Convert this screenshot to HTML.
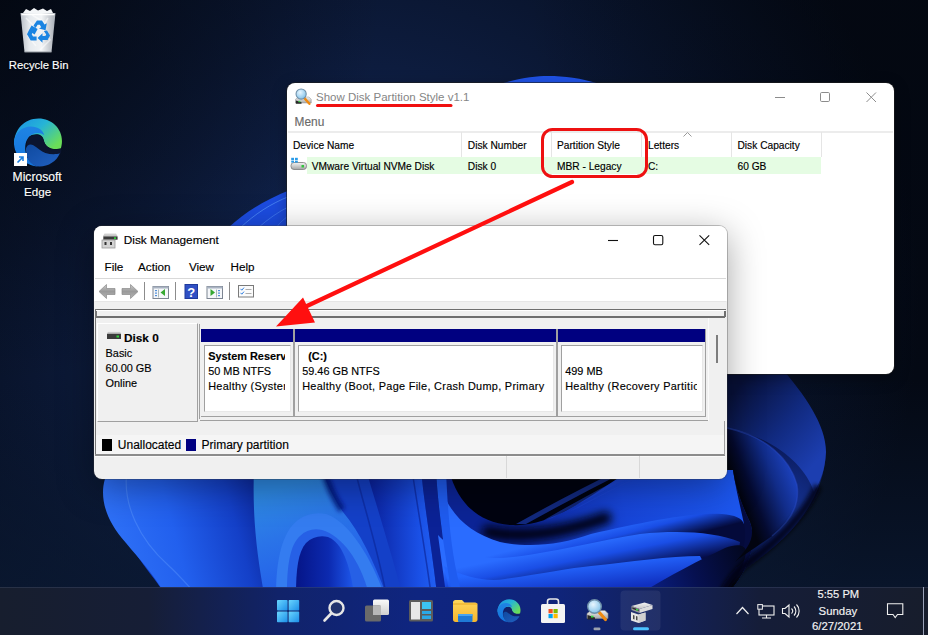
<!DOCTYPE html>
<html><head><meta charset="utf-8">
<style>
*{margin:0;padding:0;box-sizing:border-box}
html,body{width:928px;height:635px;overflow:hidden}
body{position:relative;font-family:"Liberation Sans",sans-serif;background:#0a1224;color:#000}
.a{position:absolute;white-space:nowrap;line-height:1;-webkit-text-stroke:.15px currentColor}
svg{position:absolute;overflow:visible}
</style></head><body>
<svg style="left:0;top:0" width="928" height="635" viewBox="0 0 928 635">
<defs>
<radialGradient id="bgr" gradientUnits="userSpaceOnUse" cx="360" cy="300" r="560">
<stop offset="0" stop-color="#132a5c"/><stop offset=".42" stop-color="#0d1c3e"/><stop offset=".72" stop-color="#081228"/><stop offset="1" stop-color="#040914"/>
</radialGradient>
<radialGradient id="bgtl" gradientUnits="userSpaceOnUse" cx="0" cy="0" r="380">
<stop offset="0" stop-color="#03070f" stop-opacity=".8"/><stop offset=".6" stop-color="#03070f" stop-opacity=".35"/><stop offset="1" stop-color="#03070f" stop-opacity="0"/>
</radialGradient>
<radialGradient id="bgtr" gradientUnits="userSpaceOnUse" cx="928" cy="0" r="400">
<stop offset="0" stop-color="#03070f" stop-opacity=".6"/><stop offset="1" stop-color="#03070f" stop-opacity="0"/>
</radialGradient>
<linearGradient id="bgb" gradientUnits="userSpaceOnUse" x1="0" y1="380" x2="0" y2="600">
<stop offset="0" stop-color="#0b1a34" stop-opacity="0"/><stop offset="1" stop-color="#0b1a34" stop-opacity=".75"/>
</linearGradient>
<linearGradient id="p1" gradientUnits="userSpaceOnUse" x1="110" y1="530" x2="258" y2="490">
<stop offset="0" stop-color="#2e70f6"/><stop offset=".4" stop-color="#2260ee"/><stop offset=".8" stop-color="#1440c8"/><stop offset="1" stop-color="#0c2aa0"/>
</linearGradient>
<linearGradient id="p1b" gradientUnits="userSpaceOnUse" x1="150" y1="590" x2="250" y2="560">
<stop offset="0" stop-color="#2466f2" stop-opacity="0"/><stop offset="1" stop-color="#2a70ff" stop-opacity=".55"/>
</linearGradient>
<linearGradient id="cy" gradientUnits="userSpaceOnUse" x1="270" y1="490" x2="300" y2="580">
<stop offset="0" stop-color="#2e8ae4"/><stop offset=".5" stop-color="#2a74e8"/><stop offset="1" stop-color="#2462ea"/>
</linearGradient>
<linearGradient id="arc" gradientUnits="userSpaceOnUse" x1="0" y1="510" x2="0" y2="590">
<stop offset="0" stop-color="#2e74f0"/><stop offset="1" stop-color="#1f5cf0"/>
</linearGradient>
<linearGradient id="inarc" gradientUnits="userSpaceOnUse" x1="298" y1="0" x2="354" y2="0">
<stop offset="0" stop-color="#06168a"/><stop offset=".55" stop-color="#0c2ab0"/><stop offset="1" stop-color="#1e58ec"/>
</linearGradient>
<linearGradient id="vb" gradientUnits="userSpaceOnUse" x1="370" y1="0" x2="440" y2="0">
<stop offset="0" stop-color="#0a22a0"/><stop offset=".7" stop-color="#1a50e6"/><stop offset="1" stop-color="#2262f4"/>
</linearGradient>
<linearGradient id="sw1" gradientUnits="userSpaceOnUse" x1="0" y1="525" x2="0" y2="580">
<stop offset="0" stop-color="#2262f4"/><stop offset=".45" stop-color="#1440c8"/><stop offset="1" stop-color="#0a1f90"/>
</linearGradient>
<linearGradient id="sw2" gradientUnits="userSpaceOnUse" x1="450" y1="530" x2="700" y2="480">
<stop offset="0" stop-color="#0a1f90"/><stop offset="1" stop-color="#05104a"/>
</linearGradient>
<linearGradient id="ptop" gradientUnits="userSpaceOnUse" x1="470" y1="520" x2="730" y2="480">
<stop offset="0" stop-color="#0a1f90"/><stop offset=".35" stop-color="#0f2fb8"/><stop offset=".7" stop-color="#1c56ec"/><stop offset="1" stop-color="#1648d8"/>
</linearGradient>
<linearGradient id="rib1r" gradientUnits="userSpaceOnUse" x1="730" y1="485" x2="520" y2="530">
<stop offset="0" stop-color="#1c56ee"/><stop offset=".5" stop-color="#1745d8"/><stop offset="1" stop-color="#0c2496"/>
</linearGradient>
<linearGradient id="rib1" gradientUnits="userSpaceOnUse" x1="560" y1="510" x2="574" y2="542">
<stop offset="0" stop-color="#2060f0" stop-opacity="1"/><stop offset=".4" stop-color="#1440c8" stop-opacity=".9"/><stop offset="1" stop-color="#010310" stop-opacity=".95"/>
</linearGradient>
<linearGradient id="rib2" gradientUnits="userSpaceOnUse" x1="560" y1="538" x2="567" y2="566">
<stop offset="0" stop-color="#2a6cff"/><stop offset=".4" stop-color="#1a4ee6"/><stop offset="1" stop-color="#040a3a"/>
</linearGradient>
<linearGradient id="rib3" gradientUnits="userSpaceOnUse" x1="560" y1="548" x2="567" y2="584">
<stop offset="0" stop-color="#2a6cff"/><stop offset=".4" stop-color="#1a4ee6"/><stop offset="1" stop-color="#050c48"/>
</linearGradient>
<linearGradient id="rib4" gradientUnits="userSpaceOnUse" x1="560" y1="566" x2="563" y2="594">
<stop offset="0" stop-color="#2466ff"/><stop offset="1" stop-color="#1030c0"/>
</linearGradient>
<linearGradient id="curl" gradientUnits="userSpaceOnUse" x1="600" y1="475" x2="720" y2="540">
<stop offset="0" stop-color="#1545d8"/><stop offset=".5" stop-color="#1f5ef4"/><stop offset="1" stop-color="#1a50e0"/>
</linearGradient>
<linearGradient id="crease" gradientUnits="userSpaceOnUse" x1="600" y1="590" x2="750" y2="540">
<stop offset="0" stop-color="#0d2bb0"/><stop offset=".6" stop-color="#061050"/><stop offset="1" stop-color="#020618"/>
</linearGradient>
<linearGradient id="rp" gradientUnits="userSpaceOnUse" x1="740" y1="385" x2="822" y2="455">
<stop offset="0" stop-color="#08113a"/><stop offset=".55" stop-color="#112a80"/><stop offset="1" stop-color="#1c3eb0"/>
</linearGradient>
<radialGradient id="rbody" gradientUnits="userSpaceOnUse" cx="790" cy="500" r="100">
<stop offset="0" stop-color="#14308e"/><stop offset=".55" stop-color="#0a1a5a"/><stop offset="1" stop-color="#02040f"/>
</radialGradient>
<linearGradient id="tongue" gradientUnits="userSpaceOnUse" x1="800" y1="478" x2="742" y2="500">
<stop offset="0" stop-color="#1e46c8"/><stop offset=".4" stop-color="#112c88"/><stop offset=".8" stop-color="#040a30"/><stop offset="1" stop-color="#02040f"/>
</linearGradient>
<linearGradient id="rp2" gradientUnits="userSpaceOnUse" x1="740" y1="0" x2="815" y2="0">
<stop offset="0" stop-color="#050a28"/><stop offset="1" stop-color="#1a40b8"/>
</linearGradient>
<filter id="blur4" filterUnits="userSpaceOnUse" x="0" y="0" width="928" height="635"><feGaussianBlur stdDeviation="4"/></filter>
<filter id="blur2" filterUnits="userSpaceOnUse" x="0" y="0" width="928" height="635"><feGaussianBlur stdDeviation="2"/></filter>
</defs>
<rect width="928" height="635" fill="url(#bgr)"/>
<rect width="928" height="635" fill="url(#bgb)"/>
<rect width="928" height="635" fill="url(#bgtl)"/>
<rect width="928" height="635" fill="url(#bgtr)"/>

<!-- base fill -->
<path d="M109 470 L733 470 C736 490 742 505 750 522 C758 545 748 570 728 594 L165 594 C150 570 100 520 109 470Z" fill="#1440c8"/>
<!-- ===== left petal ===== -->
<path d="M109 470 C100 485 98 512 126 543 C140 560 152 572 165 594 L276 594 C268 555 260 520 253 470Z" fill="url(#p1)"/>

<path d="M127 470 C122 505 140 540 168 565 C180 576 190 588 196 594" fill="none" stroke="#6aa4ff" stroke-opacity=".35" stroke-width="1.2"/>

<!-- ===== cyan petal and arch ===== -->
<path d="M254 470 L322 470 C328 488 335 500 343 512 C360 532 374 562 386 594 L264 594 C258 560 252 520 254 470Z" fill="url(#cy)"/>
<path d="M276 594 C276 560 282 532 298 520 C306 514 316 512 326 514 C350 522 372 560 384 594Z" fill="#347cf0"/>
<path d="M287 594 C287 565 290 545 300 536 C306 530 314 528 322 530 C342 536 360 560 369 594Z" fill="#2660e6"/>
<path d="M296 594 C296 570 298 552 306 543 C312 537 320 535 328 537 C342 542 350 565 354 594Z" fill="url(#inarc)"/>
<!-- ===== vertical bands ===== -->
<path d="M324 470 C328 486 334 498 342 510" fill="none" stroke="#06127a" stroke-width="7" filter="url(#blur2)" opacity=".85"/>
<path d="M366 470 L421 470 C425 510 432 550 437 594 L402 594 C392 555 378 510 366 470Z" fill="url(#vb)"/>
<path d="M355 470 C365 510 378 550 386 594" fill="none" stroke="#0a2090" stroke-opacity=".55" stroke-width="1.5"/>
<path d="M412 470 C418 510 425 550 431 594" fill="none" stroke="#0a2090" stroke-opacity=".6" stroke-width="1.5"/>
<path d="M421 470 L436 470 C440 520 445 560 452 594 L437 594 C432 550 425 510 421 470Z" fill="#0b2296"/>

<!-- ===== sweeping bands + hollow ===== -->
<path d="M436 470 L733 470 C736 490 742 505 750 522 C758 545 748 570 728 594 L452 594 C445 555 438 510 436 470Z" fill="#050c40"/>
<!-- ribbon 1 (petal top surface, behind) -->
<path d="M446 470 L733 470 C736 490 740 505 744 524 L744 560 L446 560Z" fill="url(#rib1r)"/>
<path d="M488 532 C520 538 560 534 605 518" fill="none" stroke="#010310" stroke-width="13" stroke-linecap="round" filter="url(#blur4)" opacity=".95"/>
<!-- hollow -->
<path d="M449 470 C458 505 480 523 511 525 C540 527 570 510 600 490 C615 480 625 474 632 470Z" fill="#010310"/>
<path d="M526 524 C560 505 595 487 628 470 L620 470 C585 486 550 505 516 524Z" fill="#2048d8" opacity=".55"/>
<path d="M552 518 C582 502 612 486 645 470 L637 470 C605 486 575 502 544 520Z" fill="#2048d8" opacity=".5"/>
<path d="M578 508 C605 494 630 480 660 470 L652 470 C625 482 598 496 570 511Z" fill="#2048d8" opacity=".4"/>
<!-- ribbon 2 (curl) -->
<path d="M440 485 C450 515 468 532 500 542 C530 548 560 545 591 534 C640 523 690 512 722 514 C735 515 742 518 744 524 C748 540 742 560 728 594 L446 594Z" fill="url(#rib2)"/>
<!-- ribbon 3 -->
<path d="M438 535 C452 550 470 558 500 558 C540 556 600 540 640 534 C680 530 715 532 740 542 C738 560 734 575 728 594 L446 594Z" fill="url(#rib3)"/>
<!-- ribbon 4 -->
<path d="M444 566 C465 578 488 582 505 579 C540 574 570 568 591 566 C630 562 670 556 700 556 L720 594 L450 594Z" fill="url(#rib4)"/>
<!-- left vertical bright strip of sweep -->
<path d="M436 470 L446 470 C448 520 452 560 462 594 L452 594 C445 555 438 510 436 470Z" fill="#1f5cf0"/>
<!-- ===== bright curl ===== -->
<path d="M640 594 C670 575 700 560 725 548 C738 543 746 545 746 552 C744 568 734 582 726 594Z" fill="url(#crease)"/>
<!-- ===== right side petals ===== -->
<path d="M727 360 L780 366 C805 395 826 425 826 452 C824 500 790 540 745 568 C735 575 728 585 724 594 L728 594 C748 570 758 545 750 522 C742 505 736 490 733 470 L727 470Z" fill="url(#rbody)"/>
<path d="M727 360 L780 366 C805 395 826 425 826 452 C825 470 821 480 814 492 C805 465 775 438 727 428Z" fill="url(#rp)"/>
<path d="M727 428 C765 436 790 458 797 485 C800 505 790 522 772 536 C758 546 742 556 735 562 C748 548 756 538 750 522 C742 505 736 490 733 470 L727 470Z" fill="url(#tongue)"/>
<path d="M727 428 C765 436 790 458 797 485 C800 505 790 522 772 536" fill="none" stroke="#2a4cc8" stroke-opacity=".45" stroke-width="1.5"/>
<path d="M818 486 C805 515 780 540 745 565 C735 573 728 583 722 594" fill="none" stroke="#02040f" stroke-opacity=".8" stroke-width="8" filter="url(#blur2)"/>
<!-- ===== top arc ===== -->
<path d="M500 84 C520 78 535 76 548 76 C565 76 580 78 600 84Z" fill="#1f52e6"/>
<!-- ===== upper left petal edge ===== -->
<path d="M228 228 C245 212 265 200 290 190 L290 228Z" fill="#1c4ce0"/>
<path d="M240 228 C255 214 270 204 290 196" fill="none" stroke="#5fa0ff" stroke-opacity=".6" stroke-width="1"/>
<path d="M258 228 C268 219 278 212 290 206" fill="none" stroke="#5fa0ff" stroke-opacity=".45" stroke-width="1"/>
<path d="M276 228 C280 222 285 218 290 215" fill="none" stroke="#5fa0ff" stroke-opacity=".35" stroke-width="1"/>
</svg>
<svg style="left:18px;top:6px" width="40" height="48" viewBox="0 0 40 48">
<defs><linearGradient id="rbg" x1="0" y1="0" x2="1" y2="0"><stop offset="0" stop-color="#b8bec6"/><stop offset=".25" stop-color="#e6eaee"/><stop offset=".6" stop-color="#f2f4f6"/><stop offset="1" stop-color="#a8aeb6"/></linearGradient></defs>
<path d="M5 7L8 3L12 5L16 2L20 4.5L25 2.5L29 5L33 3L35 7Z" fill="#f4f6f8"/>
<path d="M2.5 7H37.5L33.5 46H6.5Z" fill="url(#rbg)"/>
<path d="M8 12L16 20L10 30L18 40M30 12L24 22L32 34L22 44M14 9L26 16" fill="none" stroke="#ffffff" stroke-opacity=".55" stroke-width="1.5"/>
<path d="M3.5 8.5H36.5" stroke="#ffffff" stroke-width="1.5"/>
<path d="M6.5 46H33.5" stroke="#8f959c" stroke-width="1"/>
<g fill="#1a84e2">
<path d="M15.5 19.5L19 14.5L24 14.5L26.5 18.5L28.8 17.2L27.5 24.2L21 22.5L23.2 21.2L21.8 18.8L19.6 18.8L17.6 22Z"/>
<path d="M29 24.5L32 29.5L29.6 34H24.5V36.8L19.6 32L24.5 27.2V30H27.4L28.2 28.6L25.8 24.9Z"/>
<path d="M10.8 24.4L13.6 19.6L19.6 23L16.6 28.4L14.4 27L13.7 28.3L15 30.6H18.6V34.4H12.7L9 28.2Z"/>
</g>
</svg>
<span class="a" style="left:8.8px;top:60.33px;font-size:11.3px;color:#fff;text-shadow:0 0 2px rgba(0,0,0,.8)">Recycle Bin</span>
<svg style="left:13px;top:117px" width="50" height="50" viewBox="0 0 48 48"><defs>
<linearGradient id="dkea" x1="0" y1="0" x2="1" y2=".7"><stop offset="0" stop-color="#1a8ee6"/><stop offset=".5" stop-color="#26b4d6"/><stop offset="1" stop-color="#6ade58"/></linearGradient>
<linearGradient id="dkeb" x1="0" y1="0" x2="0" y2="1"><stop offset="0" stop-color="#1f84e4"/><stop offset="1" stop-color="#1374dc"/></linearGradient>
<linearGradient id="dkec" x1="0" y1="0" x2="1" y2="1"><stop offset="0" stop-color="#0f4aa0"/><stop offset="1" stop-color="#2160c0"/></linearGradient>
</defs>
<path d="M1 26C1 12 11 1.5 24.5 1.5C37 1.5 47 11 47 23C47 26 46.5 28 46 30C44 30.5 41 31 38 30.5C33 29.5 30 26 29.5 22C29 19 27 17 24 16.5C18 16 13 19 10 23C6 28 3 30 1 26Z" fill="url(#dkea)"/>
<path d="M16 19C20 15.5 27.5 16.5 29.5 22C30.5 27 34 30 39 31C42 31.5 45 31 46.5 30.5L46 35C42 36 36 36.2 31 35.5C24 34.5 16 33 13 29C12.5 25 13.5 21 16 19Z" fill="#0b1530"/>
<path d="M1 25C1 15 9 9 17 9C24 9 29 12.5 30 17.5C27 15 22.5 14.5 18.5 16.5C13 19.5 11 26 12 33C13 40 18 45.5 24 47.5C11 46.5 1 37 1 25Z" fill="url(#dkeb)"/>
<path d="M12.5 30C13.5 26.5 16.5 25.5 19.5 27C23.5 29.5 27 33 31 34.5C36 36 41.5 36 45 34.8C42 42.5 34 47.5 25.5 47.5C19.5 47.5 15 43.5 13.5 38C12.8 35 12.3 32.5 12.5 30Z" fill="url(#dkec)"/>
</svg>
<svg style="left:14px;top:153px" width="13" height="13" viewBox="0 0 13 13">
<rect x="0" y="0" width="13" height="13" fill="#fff"/>
<path d="M3.5 9.5L9 4M5 4H9V8" fill="none" stroke="#1c7fe0" stroke-width="1.6"/>
</svg>
<span class="a" style="left:12.6px;top:170.65px;font-size:12.1px;color:#fff;text-shadow:0 0 2px rgba(0,0,0,.8)">Microsoft</span>
<span class="a" style="left:24.0px;top:185.97px;font-size:11.6px;color:#fff;text-shadow:0 0 2px rgba(0,0,0,.8)">Edge</span>
<div class="a" style="left:287px;top:83px;width:607px;height:291px;background:#fff;border-radius:8px;box-shadow:0 0 0 1px rgba(30,30,30,.6),0 4px 16px rgba(0,0,0,.3)"></div>
<svg style="left:294px;top:88px" width="18" height="18" viewBox="0 0 24 24"><defs><radialGradient id="tisg" cx=".4" cy=".35" r=".7"><stop offset="0" stop-color="#e8f6ff"/><stop offset="1" stop-color="#7ec0e8"/></radialGradient>
<linearGradient id="tisd" x1="0" y1="0" x2="0" y2="1"><stop offset="0" stop-color="#f2f2f2"/><stop offset="1" stop-color="#a9a9a9"/></linearGradient></defs>
<path d="M2 15L6 12H20L23 15V20H2Z" fill="url(#tisd)" stroke="#8a8a8a" stroke-width=".6"/>
<path d="M2.5 16.5L10 19V21H2.5Z" fill="#2a2a2a"/>
<rect x="6" y="17.2" width="2.5" height="1.8" fill="#3bd948"/>
<path d="M13 12.5L20.5 21" stroke="#f08a10" stroke-width="3.2" stroke-linecap="round"/>
<circle cx="9.5" cy="8" r="6.8" fill="url(#tisg)" stroke="#6f8fa8" stroke-width="1.4"/>
</svg>
<span class="a" style="left:316.0px;top:92.26px;font-size:11.5px;color:#858585;-webkit-text-stroke:0">Show Disk Partition Style v1.1</span>
<svg style="left:770px;top:88px" width="115" height="20" viewBox="770 88 115 20">
<path d="M775 97.5H785" stroke="#8c8c8c" stroke-width="1"/>
<rect x="820.5" y="92.5" width="9" height="9" rx="1.2" fill="none" stroke="#8c8c8c" stroke-width="1"/>
<path d="M866.5 92.5L876 102M876 92.5L866.5 102" stroke="#8c8c8c" stroke-width="1"/>
</svg>
<span class="a" style="left:294.6px;top:117.22px;font-size:11.9px;color:#6a6a6a;">Menu</span>
<div class="a" style="left:288px;top:131px;width:605px;height:2px;background:#ececec"></div>
<div class="a" style="left:461px;top:132px;width:1px;height:25px;background:#e5e5e5"></div>
<div class="a" style="left:551px;top:132px;width:1px;height:25px;background:#e5e5e5"></div>
<div class="a" style="left:641px;top:132px;width:1px;height:25px;background:#e5e5e5"></div>
<div class="a" style="left:731px;top:132px;width:1px;height:25px;background:#e5e5e5"></div>
<div class="a" style="left:821px;top:132px;width:1px;height:25px;background:#e5e5e5"></div>
<span class="a" style="left:293.0px;top:140.96px;font-size:10.2px;color:#000;">Device Name</span>
<span class="a" style="left:467.8px;top:140.96px;font-size:10.2px;color:#000;">Disk Number</span>
<span class="a" style="left:557.0px;top:140.96px;font-size:10.2px;color:#000;">Partition Style</span>
<span class="a" style="left:648.0px;top:140.96px;font-size:10.2px;color:#000;">Letters</span>
<span class="a" style="left:737.5px;top:140.96px;font-size:10.2px;color:#000;">Disk Capacity</span>
<svg style="left:682px;top:130px" width="12" height="8" viewBox="682 130 12 8"><path d="M683.5 136.5L687.5 132.5L691.5 136.5" fill="none" stroke="#9a9a9a" stroke-width="1"/></svg>
<svg style="left:290px;top:157px" width="18" height="14" viewBox="0 0 18 14">
<defs><linearGradient id="rdg" x1="0" y1="0" x2="0" y2="1"><stop offset="0" stop-color="#f4f4f4"/><stop offset="1" stop-color="#a4a4a4"/></linearGradient></defs>
<rect x="1" y="5.5" width="15.5" height="7" rx="3" fill="url(#rdg)" stroke="#7a7a7a" stroke-width=".8"/>
<rect x="11.5" y="8" width="2.5" height="2.5" fill="#33c43d"/>
<rect x="1.2" y="0.8" width="2.8" height="2.6" fill="#2a9be8"/><rect x="5" y="0.8" width="2.8" height="2.6" fill="#2a9be8"/>
<rect x="1.2" y="4" width="2.8" height="1.6" fill="#2a9be8"/><rect x="5" y="4" width="2.8" height="1.6" fill="#2a9be8"/>
</svg>
<div class="a" style="left:307px;top:157px;width:514px;height:17px;background:#e5fce3"></div>
<span class="a" style="left:311.7px;top:161.76px;font-size:10.2px;color:#000;">VMware Virtual NVMe Disk</span>
<span class="a" style="left:467.8px;top:161.76px;font-size:10.2px;color:#000;">Disk 0</span>
<span class="a" style="left:557.0px;top:161.76px;font-size:10.2px;color:#000;">MBR - Legacy</span>
<span class="a" style="left:648.0px;top:161.76px;font-size:10.2px;color:#000;">C:</span>
<span class="a" style="left:737.5px;top:161.76px;font-size:10.2px;color:#000;">60 GB</span>
<div class="a" style="left:94px;top:226px;width:633px;height:253px;background:#f0f0f0;border-radius:8px;box-shadow:0 0 0 1px rgba(60,60,60,.3),0 8px 36px rgba(0,0,0,.36)"></div>
<div class="a" style="left:94px;top:226px;width:633px;height:75px;background:#fff;border-radius:8px 8px 0 0"></div>
<div class="a" style="left:95px;top:278px;width:631px;height:1px;background:#d9d9d9"></div>
<div class="a" style="left:95px;top:301px;width:631px;height:1px;background:#e6e6e6"></div>
<svg style="left:101px;top:232px" width="18" height="17" viewBox="0 0 18 17">
<defs><linearGradient id="dmi" x1="0" y1="0" x2="0" y2="1"><stop offset="0" stop-color="#d8d8d8"/><stop offset="1" stop-color="#a8a8a8"/></linearGradient></defs>
<path d="M3.5 1.5H15L16.5 4V8H2V4Z" fill="url(#dmi)"/>
<rect x="2.5" y="4.5" width="14" height="3" fill="#3a3a3a"/>
<rect x="13" y="5.3" width="2" height="1.6" fill="#2fdc3a"/>
<rect x="1" y="8" width="13" height="8" fill="#d4d4d4" stroke="#9a9a9a" stroke-width=".8"/>
<rect x="3.5" y="10" width="2" height="3" fill="#333"/>
<rect x="9" y="10" width="2" height="3" fill="#333"/>
</svg>
<span class="a" style="left:123.8px;top:234.51px;font-size:11.8px;color:#000;">Disk Management</span>
<svg style="left:600px;top:230px" width="115" height="20" viewBox="600 230 115 20">
<path d="M608 240.5H618" stroke="#111" stroke-width="1.1"/>
<rect x="653.5" y="235.5" width="9.3" height="9.3" rx="1.5" fill="none" stroke="#111" stroke-width="1.1"/>
<path d="M699.5 235.3L709.2 244.8M709.2 235.3L699.5 244.8" stroke="#111" stroke-width="1.1"/>
</svg>
<span class="a" style="left:104.5px;top:260.79px;font-size:11.7px;color:#000;">File</span>
<span class="a" style="left:138.0px;top:260.79px;font-size:11.7px;color:#000;">Action</span>
<span class="a" style="left:188.9px;top:260.79px;font-size:11.7px;color:#000;">View</span>
<span class="a" style="left:230.5px;top:260.79px;font-size:11.7px;color:#000;">Help</span>
<svg style="left:94px;top:279px" width="170" height="22" viewBox="94 279 170 22">
<defs>
<linearGradient id="arr" x1="0" y1="0" x2="0" y2="1"><stop offset="0" stop-color="#c9c9c9"/><stop offset=".5" stop-color="#9a9a9a"/><stop offset="1" stop-color="#b5b5b5"/></linearGradient>
</defs>
<path d="M99 291.5L106.5 284.5V288.5H115V294.5H106.5V298.5Z" fill="url(#arr)" stroke="#8a8a8a" stroke-width=".7"/>
<path d="M138 291.5L130.5 284.5V288.5H122V294.5H130.5V298.5Z" fill="url(#arr)" stroke="#8a8a8a" stroke-width=".7"/>
<path d="M144.5 282V300" stroke="#8c8c8c" stroke-width="1"/>
<rect x="153" y="286.5" width="15.5" height="12" fill="#f5f7fa" stroke="#7d8592" stroke-width="1"/>
<rect x="153" y="286.5" width="15.5" height="2" fill="#a9b3c2"/>
<rect x="155" y="290" width="2" height="1.2" fill="#4f8ed8"/><rect x="155" y="292.5" width="2" height="1.2" fill="#4f8ed8"/><rect x="155" y="295" width="2" height="1.2" fill="#4f8ed8"/>
<path d="M158.5 289.5V297.5" stroke="#9aa" stroke-width=".8"/>
<path d="M165 289L160.5 292.5L165 296Z" fill="#36a832"/>
<path d="M175.5 282V300" stroke="#8c8c8c" stroke-width="1"/>
<rect x="184.5" y="284" width="13.5" height="15" fill="#1f3a9c"/>
<rect x="185.5" y="285" width="11.5" height="13" fill="#3050c4"/>
<text x="191.2" y="296.5" font-family="Liberation Sans" font-weight="bold" font-size="13" fill="#fff" text-anchor="middle">?</text>
<rect x="207" y="286.5" width="15.5" height="12" fill="#f5f7fa" stroke="#7d8592" stroke-width="1"/>
<rect x="207" y="286.5" width="15.5" height="2" fill="#a9b3c2"/>
<rect x="218" y="290" width="2" height="1.2" fill="#4f8ed8"/><rect x="218" y="292.5" width="2" height="1.2" fill="#4f8ed8"/><rect x="218" y="295" width="2" height="1.2" fill="#4f8ed8"/>
<path d="M216.5 289.5V297.5" stroke="#9aa" stroke-width=".8"/>
<path d="M210.5 289L215 292.5L210.5 296Z" fill="#36a832"/>
<path d="M229.5 282V300" stroke="#8c8c8c" stroke-width="1"/>
<rect x="238.5" y="285.5" width="15" height="11.5" fill="#fbfbfb" stroke="#7a7a7a" stroke-width="1"/>
<path d="M240.5 288.8L241.8 290.2L244 287.6M240.5 292.8L241.8 294.2L244 291.6" fill="none" stroke="#2d7de0" stroke-width="1"/>
<path d="M245.5 289.5H251.5M245.5 293.5H251.5" stroke="#999" stroke-width=".8"/>
</svg>
<div class="a" style="left:95px;top:309px;width:631px;height:1px;background:#6f6f6f"></div>
<div class="a" style="left:95px;top:309px;width:1.5px;height:146px;background:#767676"></div>
<div class="a" style="left:96px;top:310px;width:629px;height:1px;background:#fff"></div>
<div class="a" style="left:96px;top:316px;width:629px;height:1.5px;background:#6f6f6f"></div>
<div class="a" style="left:724px;top:311px;width:1.5px;height:6px;background:#6f6f6f"></div>
<div class="a" style="left:96px;top:318px;width:629px;height:136px;background:#f0f0f0"></div>
<div class="a" style="left:97px;top:323px;width:101px;height:99px;background:#f0f0f0;border-top:1px solid #fff;border-left:1px solid #fff;border-right:1px solid #a0a0a0;border-bottom:1px solid #a0a0a0"></div>
<svg style="left:106px;top:330px" width="16" height="11" viewBox="0 0 16 11">
<defs><linearGradient id="dk" x1="0" y1="0" x2="0" y2="1"><stop offset="0" stop-color="#e8e8e8"/><stop offset="1" stop-color="#9c9c9c"/></linearGradient></defs>
<path d="M2 1.5H14L15 4H1Z" fill="url(#dk)"/>
<rect x="1" y="4" width="14" height="5" fill="#3b3b3b"/>
<rect x="10.5" y="5.5" width="2.5" height="2" fill="#32d43c"/>
</svg>
<span class="a" style="left:124.0px;top:332.71px;font-size:11.8px;color:#000;font-weight:bold;">Disk 0</span>
<span class="a" style="left:105.6px;top:348.27px;font-size:10.9px;color:#000;">Basic</span>
<span class="a" style="left:105.6px;top:363.27px;font-size:10.9px;color:#000;">60.00 GB</span>
<span class="a" style="left:105.6px;top:378.27px;font-size:10.9px;color:#000;">Online</span>
<div class="a" style="left:199px;top:324px;width:1.3px;height:95px;background:#a0a0a0"></div>
<div class="a" style="left:201px;top:329px;width:92px;height:13px;background:#000080"></div>
<div class="a" style="left:204px;top:345px;width:87px;height:67px;background:#fff;border-left:1px solid #a0a0a0;border-top:1px solid #a0a0a0;border-right:1px solid #e8e8e8;border-bottom:1px solid #e8e8e8"></div>
<span class="a" style="left:208.2px;top:350.77px;font-size:10.9px;color:#000;font-weight:bold;overflow:hidden;width:77px;">System Reserved</span>
<span class="a" style="left:208.2px;top:365.77px;font-size:10.9px;color:#000;overflow:hidden;width:77px;">50 MB NTFS</span>
<span class="a" style="left:208.2px;top:380.77px;font-size:10.9px;color:#000;overflow:hidden;width:77px;letter-spacing:.3px;">Healthy (System, Active, Primary Partition)</span>
<div class="a" style="left:293px;top:329px;width:1.5px;height:88px;background:#a0a0a0"></div>
<div class="a" style="left:295px;top:329px;width:261px;height:13px;background:#000080"></div>
<div class="a" style="left:298px;top:345px;width:256px;height:67px;background:#fff;border-left:1px solid #a0a0a0;border-top:1px solid #a0a0a0;border-right:1px solid #e8e8e8;border-bottom:1px solid #e8e8e8"></div>
<span class="a" style="left:302.2px;top:350.77px;font-size:10.9px;color:#000;font-weight:bold;overflow:hidden;width:246px;">&nbsp;&nbsp;(C:)</span>
<span class="a" style="left:302.2px;top:365.77px;font-size:10.9px;color:#000;overflow:hidden;width:246px;">59.46 GB NTFS</span>
<span class="a" style="left:302.2px;top:380.77px;font-size:10.9px;color:#000;overflow:hidden;width:246px;letter-spacing:.3px;">Healthy (Boot, Page File, Crash Dump, Primary Partition)</span>
<div class="a" style="left:556px;top:329px;width:1.5px;height:88px;background:#a0a0a0"></div>
<div class="a" style="left:558px;top:329px;width:147px;height:13px;background:#000080"></div>
<div class="a" style="left:561px;top:345px;width:142px;height:67px;background:#fff;border-left:1px solid #a0a0a0;border-top:1px solid #a0a0a0;border-right:1px solid #e8e8e8;border-bottom:1px solid #e8e8e8"></div>
<span class="a" style="left:565.2px;top:365.77px;font-size:10.9px;color:#000;overflow:hidden;width:132px;">499 MB</span>
<span class="a" style="left:565.2px;top:380.77px;font-size:10.9px;color:#000;overflow:hidden;width:132px;letter-spacing:.3px;">Healthy (Recovery Partition)</span>
<div class="a" style="left:201px;top:416px;width:505px;height:1px;background:#a0a0a0"></div>
<div class="a" style="left:200px;top:419.5px;width:508px;height:1px;background:#a0a0a0"></div>
<div class="a" style="left:704.5px;top:329px;width:1px;height:88px;background:#a0a0a0"></div>
<div class="a" style="left:708px;top:318px;width:1px;height:103px;background:#fafafa"></div>
<div class="a" style="left:716px;top:335px;width:1.5px;height:28px;background:#7d7d7d"></div>
<div class="a" style="left:96px;top:435px;width:628px;height:19px;background:#f5f5f5"></div>
<div class="a" style="left:102px;top:439px;width:10px;height:12px;background:#000"></div>
<span class="a" style="left:117.8px;top:438.74px;font-size:12px;color:#000;">Unallocated</span>
<div class="a" style="left:186px;top:439px;width:10px;height:12px;background:#000080"></div>
<span class="a" style="left:201.5px;top:438.74px;font-size:12px;color:#000;">Primary partition</span>
<div class="a" style="left:95px;top:454px;width:630px;height:1.5px;background:#8c8c8c"></div>
<div class="a" style="left:95px;top:455.5px;width:630px;height:1px;background:#fafafa"></div>
<div class="a" style="left:724px;top:421px;width:1px;height:34px;background:#a0a0a0"></div>
<div class="a" style="left:506px;top:456px;width:1px;height:22px;background:#d8d8d8"></div>
<div class="a" style="left:639px;top:456px;width:1px;height:22px;background:#d8d8d8"></div>
<svg style="left:0;top:0" width="928" height="635" viewBox="0 0 928 635">
<path d="M317.5 105.5H451" stroke="#f01010" stroke-width="3" stroke-linecap="round"/>
<rect x="542.5" y="129.5" width="104" height="47" rx="10" fill="none" stroke="#ee1111" stroke-width="3"/>
<path d="M572 182L292 313" stroke="#ff0f0f" stroke-width="4.2" stroke-linecap="round"/>
<path d="M276 326.5L303 297.5L315 322.5Z" fill="#ff0f0f"/>
</svg>
<div class="a" style="left:0px;top:587px;width:928px;height:48px;background:linear-gradient(90deg,#171e2e 0%,#161e36 16%,#11236a 30%,#0f2580 45%,#0f247a 60%,#13215a 72%,#151d38 82%,#171d2c 100%)"></div>
<div class="a" style="left:0px;top:587px;width:928px;height:1px;background:rgba(120,140,180,.18)"></div>
<svg style="left:0;top:587px" width="928" height="48" viewBox="0 587 928 48">
<defs>
<linearGradient id="stg" x1="0" y1="0" x2="1" y2="1"><stop offset="0" stop-color="#6ad6ff"/><stop offset="1" stop-color="#1c8ee8"/></linearGradient>
<linearGradient id="tvg" x1="0" y1="0" x2="0" y2="1"><stop offset="0" stop-color="#fafafa"/><stop offset="1" stop-color="#cfcfcf"/></linearGradient>
<linearGradient id="fdg" x1="0" y1="0" x2="0" y2="1"><stop offset="0" stop-color="#ffd65c"/><stop offset="1" stop-color="#f5b52e"/></linearGradient>
</defs>
<!-- start -->
<rect x="277" y="600" width="10.6" height="10.6" rx=".8" fill="url(#stg)"/>
<rect x="288.6" y="600" width="10.6" height="10.6" rx=".8" fill="url(#stg)"/>
<rect x="277" y="611.6" width="10.6" height="10.6" rx=".8" fill="url(#stg)"/>
<rect x="288.6" y="611.6" width="10.6" height="10.6" rx=".8" fill="url(#stg)"/>
<!-- search -->
<circle cx="336.5" cy="608" r="7" fill="#22336e" stroke="#e6e6e6" stroke-width="2.4"/>
<path d="M331.2 613.5L324.5 620.5" stroke="#e6e6e6" stroke-width="2.6" stroke-linecap="round"/>
<!-- task view -->
<rect x="373" y="599.5" width="16" height="15.5" rx="1.5" fill="url(#tvg)"/>
<rect x="365" y="605.5" width="16" height="16" rx="1.5" fill="#6a6a6a"/>
<rect x="373" y="605.5" width="8" height="9.5" fill="#b8b8b8"/>
<!-- widgets -->
<rect x="409" y="600" width="24" height="21.5" rx="1.5" fill="#5c5c5c"/>
<rect x="411" y="602" width="9" height="17.5" fill="#e8e8e8"/>
<rect x="422" y="602" width="9" height="7" fill="#3cc4f4"/>
<rect x="422" y="611" width="9" height="3" fill="#2aa8e8"/>
<rect x="422" y="615.5" width="9" height="3.5" fill="#2aa8e8"/>
<!-- explorer -->
<path d="M453 602.5C453 601 454 600 455.5 600H462L464.5 602.5H475C476.5 602.5 477.5 603.5 477.5 605V619.5C477.5 621 476.5 622 475 622H455.5C454 622 453 621 453 619.5Z" fill="url(#fdg)"/>
<path d="M453 604H477.5" stroke="#e9a825" stroke-width="1"/>
<rect x="458" y="614" width="14.5" height="8" rx="1" fill="#1f7ad6"/>
<rect x="458" y="614" width="14.5" height="2" fill="#47a4f0"/>
<!-- edge -->
<g transform="translate(497 598.5) scale(0.5)"><defs>
<linearGradient id="tbea" x1="0" y1="0" x2="1" y2=".7"><stop offset="0" stop-color="#1a8ee6"/><stop offset=".5" stop-color="#26b4d6"/><stop offset="1" stop-color="#6ade58"/></linearGradient>
<linearGradient id="tbeb" x1="0" y1="0" x2="0" y2="1"><stop offset="0" stop-color="#1f84e4"/><stop offset="1" stop-color="#1374dc"/></linearGradient>
<linearGradient id="tbec" x1="0" y1="0" x2="1" y2="1"><stop offset="0" stop-color="#0f4aa0"/><stop offset="1" stop-color="#2160c0"/></linearGradient>
</defs>
<path d="M1 26C1 12 11 1.5 24.5 1.5C37 1.5 47 11 47 23C47 26 46.5 28 46 30C44 30.5 41 31 38 30.5C33 29.5 30 26 29.5 22C29 19 27 17 24 16.5C18 16 13 19 10 23C6 28 3 30 1 26Z" fill="url(#tbea)"/>
<path d="M16 19C20 15.5 27.5 16.5 29.5 22C30.5 27 34 30 39 31C42 31.5 45 31 46.5 30.5L46 35C42 36 36 36.2 31 35.5C24 34.5 16 33 13 29C12.5 25 13.5 21 16 19Z" fill="#10226a"/>
<path d="M1 25C1 15 9 9 17 9C24 9 29 12.5 30 17.5C27 15 22.5 14.5 18.5 16.5C13 19.5 11 26 12 33C13 40 18 45.5 24 47.5C11 46.5 1 37 1 25Z" fill="url(#tbeb)"/>
<path d="M12.5 30C13.5 26.5 16.5 25.5 19.5 27C23.5 29.5 27 33 31 34.5C36 36 41.5 36 45 34.8C42 42.5 34 47.5 25.5 47.5C19.5 47.5 15 43.5 13.5 38C12.8 35 12.3 32.5 12.5 30Z" fill="url(#tbec)"/>
</g>
<!-- store -->
<path d="M547.5 604V601.5C547.5 599.8 548.5 599 550 599H556C557.5 599 558.5 599.8 558.5 601.5V604" fill="none" stroke="#e8e8e8" stroke-width="1.6"/>
<rect x="541" y="604" width="24" height="19" rx="1.5" fill="#f4f4f4"/>
<rect x="548.5" y="609" width="4.2" height="4.2" fill="#f25022"/>
<rect x="553.5" y="609" width="4.2" height="4.2" fill="#7fba00"/>
<rect x="548.5" y="614" width="4.2" height="4.2" fill="#00a4ef"/>
<rect x="553.5" y="614" width="4.2" height="4.2" fill="#ffb900"/>
<!-- sdps -->
<g transform="translate(585 598.5)"><defs><radialGradient id="tbsg" cx=".4" cy=".35" r=".7"><stop offset="0" stop-color="#e8f6ff"/><stop offset="1" stop-color="#7ec0e8"/></radialGradient>
<linearGradient id="tbsd" x1="0" y1="0" x2="0" y2="1"><stop offset="0" stop-color="#f2f2f2"/><stop offset="1" stop-color="#a9a9a9"/></linearGradient></defs>
<path d="M2 15L6 12H20L23 15V20H2Z" fill="url(#tbsd)" stroke="#8a8a8a" stroke-width=".6"/>
<path d="M2.5 16.5L10 19V21H2.5Z" fill="#2a2a2a"/>
<rect x="6" y="17.2" width="2.5" height="1.8" fill="#3bd948"/>
<path d="M13 12.5L20.5 21" stroke="#f08a10" stroke-width="3.2" stroke-linecap="round"/>
<circle cx="9.5" cy="8" r="6.8" fill="url(#tbsg)" stroke="#6f8fa8" stroke-width="1.4"/>
</g>
<rect x="593.5" y="627.5" width="7" height="2.8" rx="1.4" fill="#9aa0ad"/>
<!-- active dm -->
<rect x="620.5" y="590.5" width="40" height="40" rx="4" fill="#ffffff" fill-opacity=".07"/>
<g transform="translate(629.5 600)"><defs><linearGradient id="dmtg" x1="0" y1="0" x2="0" y2="1"><stop offset="0" stop-color="#f4f4f4"/><stop offset="1" stop-color="#c4c4c4"/></linearGradient></defs>
<path d="M2 6L15 2.5L23 5L10 9Z" fill="url(#dmtg)"/>
<path d="M2 6L10 9V13L2 10Z" fill="#9a9a9a"/>
<path d="M10 9L23 5V9L10 13Z" fill="#dcdcdc"/>
<path d="M2.8 7.2L9.2 9.6V11.2L2.8 8.8Z" fill="#2f2f2f"/>
<rect x="6.5" y="9" width="2" height="1.6" fill="#3bd948"/>
<path d="M1.5 12L9 14.5L16 12.5V20.5L9 23L1.5 20.5Z" fill="#e6e6e6"/>
<path d="M9 14.5L16 12.5V20.5L9 23Z" fill="#d0d0d0"/>
<path d="M3.5 15V19L5 19.5V15.5Z" fill="#4a4a4a"/>
<path d="M6.5 16V20L8 20.5V16.5Z" fill="#4a4a4a"/>
</g>
<rect x="633" y="627.3" width="16" height="3" rx="1.5" fill="#4cc2ff"/>
<!-- tray -->
<path d="M736.5 614L742.5 607.5L748.5 614" fill="none" stroke="#f0f0f0" stroke-width="1.2"/>
<rect x="759" y="606" width="15" height="9" fill="none" stroke="#f0f0f0" stroke-width="1.1"/>
<path d="M766.5 615V618M762 618H771" stroke="#f0f0f0" stroke-width="1.1"/>
<rect x="757.8" y="604.6" width="4.6" height="4.6" fill="#1b2340" stroke="#f0f0f0" stroke-width="1"/>
<path d="M782.5 608.5H785L789 605V617L785 613.5H782.5Z" fill="none" stroke="#f0f0f0" stroke-width="1.1"/>
<path d="M791.5 608.5C793 610 793 612 791.5 613.5M794 606.5C796.5 609 796.5 613 794 615.5M796.5 604.5C800 608 800 614 796.5 617.5" fill="none" stroke="#f0f0f0" stroke-width="1.1"/>
<path d="M887.5 603.8H902.8V614.5H897.5L895.2 617.5L893 614.5H887.5Z" fill="none" stroke="#f0f0f0" stroke-width="1.1"/>
<path d="M923.5 587V635" stroke="#9aa2b8" stroke-width="1"/>
</svg>
<span class="a" style="left:817.5px;top:589.31px;font-size:11.2px;color:#f4f4f4;">5:55 PM</span>
<span class="a" style="left:818.6px;top:605.94px;font-size:11.4px;color:#f4f4f4;">Sunday</span>
<span class="a" style="left:811.9px;top:621.24px;font-size:11.4px;color:#f4f4f4;">6/27/2021</span>
</body></html>
